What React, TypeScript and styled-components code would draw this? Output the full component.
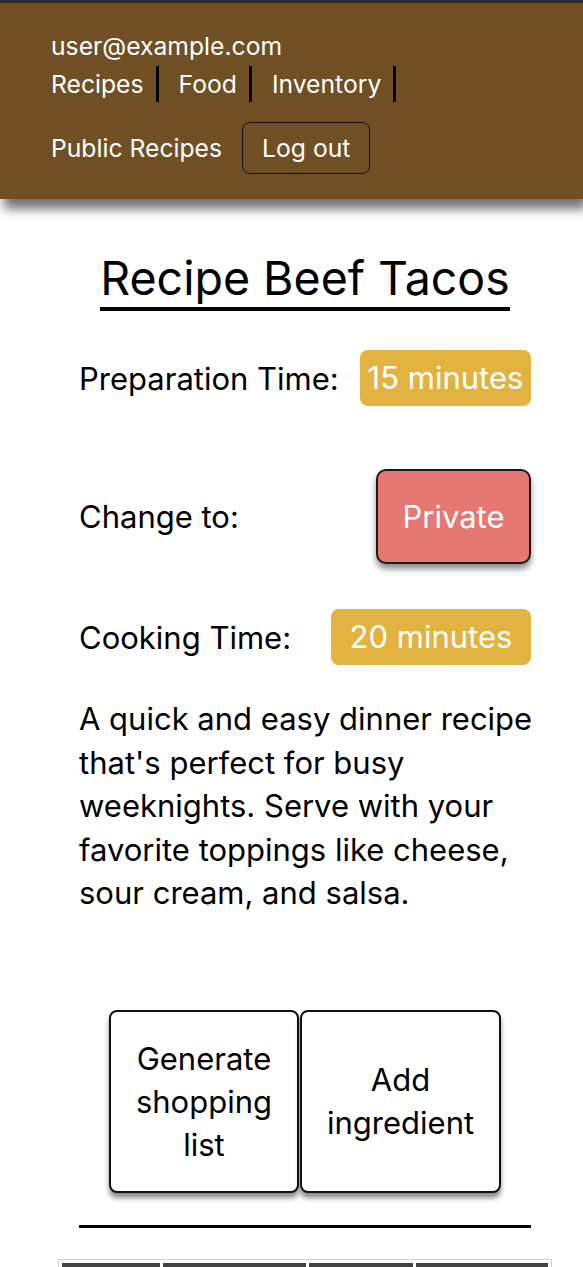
import React from 'react';
import styled, { createGlobalStyle } from 'styled-components';

const GlobalStyle = createGlobalStyle`
  html, body {
    margin: 0;
    padding: 0;
    background: #fff;
    font-family: Inter, "Noto Sans", sans-serif;
    color: #000;
  }
  * {
    box-sizing: border-box;
  }
`;

const columns = [98, 142, 104, 132];

const App: React.FC = () => {
  return (
    <>
      <GlobalStyle />
      <Header>
        <Email>user@example.com</Email>
        <Nav>
          <NavLink>Recipes</NavLink>
          <NavLink>Food</NavLink>
          <NavLink>Inventory</NavLink>
        </Nav>
        <SubNav>
          <PlainLink>Public Recipes</PlainLink>
          <LogoutButton>Log out</LogoutButton>
        </SubNav>
      </Header>
      <Main>
        <Title>Recipe Beef Tacos</Title>
        <Row $top={39}>
          <Label>Preparation Time:</Label>
          <Badge $width={171}>15 minutes</Badge>
        </Row>
        <Row $top={63}>
          <Label>Change to:</Label>
          <PrivateButton>Private</PrivateButton>
        </Row>
        <Row $top={45}>
          <Label>Cooking Time:</Label>
          <Badge $width={200}>20 minutes</Badge>
        </Row>
        <Description>
          A quick and easy dinner recipe that's perfect for busy weeknights. Serve with your
          favorite toppings like cheese, sour cream, and salsa.
        </Description>
        <Actions>
          <ActionButton>Generate shopping list</ActionButton>
          <ActionButton>Add ingredient</ActionButton>
        </Actions>
        <Divider />
        <IngredientTable>
          <thead>
            <tr>
              {columns.map((w, i) => (
                <HeadCell key={i} $width={w} />
              ))}
            </tr>
          </thead>
        </IngredientTable>
      </Main>
    </>
  );
};

const Header = styled.header`
  background: #704f25;
  border-top: 3px solid #2b2a2e;
  padding: 29px 51px 25px;
  box-shadow: 4px 10px 10px rgba(0, 0, 0, 0.55);
  color: #fff;
  font-size: 24.7px;
`;

const Email = styled.div`
  line-height: 29px;
`;

const Nav = styled.nav`
  display: flex;
  margin-top: 5px;
`;

const NavLink = styled.a`
  display: block;
  line-height: 36px;
  padding-right: 12px;
  margin-right: 20px;
  border-right: 3px solid #000;
  cursor: pointer;
`;

const SubNav = styled.div`
  display: flex;
  align-items: center;
  gap: 20px;
  margin-top: 20px;
`;

const PlainLink = styled.a`
  cursor: pointer;
`;

const LogoutButton = styled.button`
  height: 52px;
  padding: 0 19px;
  background: transparent;
  border: 1.5px solid #1a1208;
  border-radius: 8px;
  color: #fff;
  font: inherit;
`;

const Main = styled.main`
  width: 452px;
  margin-left: 79px;
  display: flex;
  flex-direction: column;
  align-items: center;
`;

const Title = styled.h1`
  margin: 51px 0 0;
  font-size: 46.5px;
  font-weight: 400;
  line-height: 56px;
  padding-bottom: 1px;
  border-bottom: 4px solid #000;
`;

const Row = styled.div<{ $top: number }>`
  align-self: stretch;
  display: flex;
  align-items: center;
  justify-content: space-between;
  margin-top: ${(p) => p.$top}px;
`;

const Label = styled.span`
  font-size: 31px;
`;

const Badge = styled.span<{ $width: number }>`
  width: ${(p) => p.$width}px;
  background: #e3b341;
  color: #fff;
  border-radius: 8px;
  font-size: 31px;
  line-height: 34px;
  padding: 11px 0;
  text-align: center;
`;

const PrivateButton = styled.button`
  width: 155px;
  background: #e57872;
  color: #fff;
  border: 2px solid #1a1a1a;
  border-radius: 10px;
  font-family: inherit;
  font-size: 31px;
  line-height: 35px;
  padding: 28px 0;
  box-shadow: 0 5px 6px rgba(0, 0, 0, 0.45);
`;

const Description = styled.p`
  align-self: flex-start;
  width: 462px;
  margin: 32px 0 0;
  font-size: 31px;
  line-height: 43.5px;
`;

const Actions = styled.div`
  display: flex;
  gap: 1px;
  margin-top: 95px;
`;

const ActionButton = styled.button`
  width: min-content;
  display: flex;
  align-items: center;
  justify-content: center;
  background: #fff;
  color: #000;
  border: 2px solid #111;
  border-radius: 8px;
  padding: 25px 25px;
  font-family: inherit;
  font-size: 31px;
  line-height: 43px;
  text-align: center;
  box-shadow: 0 5px 5px rgba(0, 0, 0, 0.45);
`;

const Divider = styled.hr`
  align-self: stretch;
  margin: 32px 0 0;
  border: none;
  border-top: 3px solid #000;
`;

const IngredientTable = styled.table`
  flex-shrink: 0;
  width: 494px;
  margin-top: 31px;
  border: 1px solid #cfcfcf;
  border-spacing: 3px;
`;

const HeadCell = styled.th<{ $width: number }>`
  width: ${(p) => p.$width}px;
  height: 48px;
  background: #444;
`;

export default App;
